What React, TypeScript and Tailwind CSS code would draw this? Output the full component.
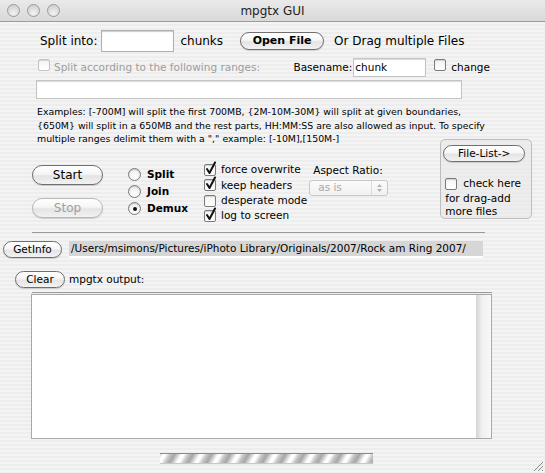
import React from "react";

const font = "font-['DejaVu_Sans',sans-serif]";

function Check({ checked = false, disabled = false }: { checked?: boolean; disabled?: boolean }) {
  return (
    <span className="relative inline-block w-[12px] h-[12px] shrink-0">
      <span
        className={
          "absolute inset-0 rounded-[2px] border bg-[linear-gradient(#f4f4f4,#ffffff)] shadow-[inset_0_1px_1px_rgba(0,0,0,0.15)] " +
          (disabled ? "border-[#c4c4c4]" : "border-[#7a7a7a]")
        }
      />
      {checked && (
        <svg className="absolute left-[1px] top-[-3px]" width="12" height="14" viewBox="0 0 12 14">
          <path d="M2 8 L4.5 12 L10 1.5" fill="none" stroke="#111" strokeWidth="2" strokeLinecap="round" strokeLinejoin="round" />
        </svg>
      )}
    </span>
  );
}

function Radio({ selected = false }: { selected?: boolean }) {
  return (
    <span className="relative inline-flex items-center justify-center w-[13px] h-[13px] rounded-full border border-[#7a7a7a] bg-[radial-gradient(circle_at_50%_70%,#ffffff,#e6e6e6)] shadow-[inset_0_1px_1px_rgba(0,0,0,0.15)] shrink-0">
      {selected && <span className="w-[4px] h-[4px] rounded-full bg-[#111]" />}
    </span>
  );
}

function AquaButton({
  children,
  className = "",
  disabled = false,
}: {
  children: React.ReactNode;
  className?: string;
  disabled?: boolean;
}) {
  return (
    <div
      className={
        "flex items-center justify-center rounded-full border bg-[linear-gradient(#ffffff_0%,#f6f6f6_45%,#e4e4e4_55%,#f2f2f2_100%)] shadow-[0_1px_1px_rgba(0,0,0,0.15)] " +
        (disabled ? "border-[#b8b8b8] text-[#a0a0a0]" : "border-[#6f6f6f] text-black") +
        " " +
        className
      }
    >
      {children}
    </div>
  );
}

export default function App() {
  return (
    <div
      className={
        "relative w-[545px] h-[473px] overflow-hidden text-black bg-[repeating-linear-gradient(180deg,#ededed_0px,#ededed_2px,#f4f4f4_2px,#f4f4f4_4px)] " +
        font
      }
    >
      {/* title bar */}
      <div className="relative flex items-center h-[22px] border-b border-[#9c9c9c] bg-[linear-gradient(#eaeaea,#d9d9d9)]">
        <div className="flex items-center gap-[7px] pl-[7px]">
          {[0, 1, 2].map((i) => (
            <span
              key={i}
              className="w-[13px] h-[13px] rounded-full border border-[#9a9a9a] bg-[radial-gradient(circle_at_50%_75%,#f2f2f2,#c9c9c9)]"
            />
          ))}
        </div>
        <div className="absolute inset-x-0 top-0 h-[22px] flex items-center justify-center text-[12px] text-[#222]">
          mpgtx GUI
        </div>
      </div>

      {/* row 1 */}
      <div className="flex items-center mt-[8px] h-[22px] text-[12px]">
        <span className="ml-[40px]">Split into:</span>
        <div className="ml-[4px] w-[73px] h-[22px] bg-white border border-[#b0b0b0] shadow-[inset_0_1px_1px_rgba(0,0,0,0.2)]" />
        <span className="ml-[6px]">chunks</span>
        <AquaButton className="ml-[17px] w-[84px] h-[18px] text-[11px] font-bold">Open File</AquaButton>
        <span className="ml-[10px]">Or Drag multiple Files</span>
      </div>

      {/* row 2 */}
      <div className="flex items-center mt-[6px] h-[19px] text-[10.5px]">
        <span className="ml-[38px]">
          <Check disabled />
        </span>
        <span className="ml-[4px] text-[#9d9d9d]">Split according to the following ranges:</span>
        <span className="ml-auto">Basename:</span>
        <div className="ml-[1px] w-[73px] h-[19px] bg-white border border-[#c4c4c4] shadow-[inset_0_1px_1px_rgba(0,0,0,0.15)] flex items-center pl-[1px]">
          chunk
        </div>
        <span className="ml-[8px]">
          <Check />
        </span>
        <span className="ml-[5px] mr-[55px]">change</span>
      </div>

      {/* row 3 */}
      <div className="mt-[3px] ml-[36px] w-[426px] h-[19px] bg-white border border-[#c4c4c4] shadow-[inset_0_1px_1px_rgba(0,0,0,0.15)]" />

      {/* examples */}
      <div className="mt-[6px] ml-[37px] h-[34px] text-[9.4px] leading-[13.5px]">
        Examples: [-700M] will split the first 700MB, {"{2M-10M-30M}"} will split at given boundaries,
        <br />
        {"{650M}"} will split in a 650MB and the rest parts, HH:MM:SS are also allowed as input. To specify
        <br />
        multiple ranges delimit them with a "," example: [-10M],[150M-]
      </div>

      {/* middle section */}
      <div className="flex items-start h-[80px]">
        <div className="ml-[32px] pt-[26px] flex flex-col gap-[13px]">
          <AquaButton className="w-[71px] h-[20px] text-[12px]">Start</AquaButton>
          <AquaButton disabled className="w-[71px] h-[20px] text-[12px]">
            Stop
          </AquaButton>
        </div>

        <div className="ml-[25px] pt-[29px] flex flex-col gap-[4px] text-[10.5px] font-bold">
          <div className="flex items-center gap-[6px] h-[13px]">
            <Radio />
            Split
          </div>
          <div className="flex items-center gap-[6px] h-[13px]">
            <Radio />
            Join
          </div>
          <div className="flex items-center gap-[6px] h-[13px]">
            <Radio selected />
            Demux
          </div>
        </div>

        <div className="ml-[16px] pt-[25px] flex flex-col gap-[3.4px] text-[10.5px]">
          {[
            ["force overwrite", true],
            ["keep headers", true],
            ["desperate mode", false],
            ["log to screen", true],
          ].map(([label, on]) => (
            <div key={label as string} className="flex items-center gap-[5px] h-[12px]">
              <Check checked={on as boolean} />
              {label}
            </div>
          ))}
        </div>

        <div className="ml-[2px] pt-[25px] flex flex-col text-[10.5px]">
          <span className="ml-[4px] h-[13px] leading-[13px]">Aspect Ratio:</span>
          <div className="mt-[3px] w-[79px] h-[16px] flex items-center rounded-[3px] border border-[#c8c8c8] bg-[linear-gradient(#fbfbfb,#f1f1f1)] text-[#a8a8a8]">
            <span className="ml-[8px] flex-1">as is</span>
            <span className="w-[16px] h-full flex items-center justify-center border-l border-[#dadada]">
              <svg width="7" height="10" viewBox="0 0 7 10">
                <path d="M1 4 L3.5 1 L6 4 Z M1 6 L3.5 9 L6 6 Z" fill="#b4b4b4" />
              </svg>
            </span>
          </div>
        </div>

        <div className="ml-[52px] w-[92px] h-[80px] rounded-[5px] border border-[#bdbdbd] bg-[#e8e8e8]/60 flex flex-col text-[10.5px]">
          <AquaButton className="mt-[5px] ml-[2px] w-[82px] h-[17px] text-[10.5px]">File-List-&gt;</AquaButton>
          <div className="mt-[16px] ml-[4px] flex items-center gap-[6px] h-[12px]">
            <Check />
            check here
          </div>
          <div className="ml-[4px] mt-[2px] leading-[13px]">
            for drag-add
            <br />
            more files
          </div>
        </div>
      </div>

      {/* separator */}
      <div className="mt-[13px] ml-[32px] w-[453px] h-[1px] bg-[#9a9a9a]" />

      {/* getinfo row */}
      <div className="flex items-center mt-[8px] h-[17px] text-[10.5px]">
        <AquaButton className="ml-[3px] w-[59px] h-[17px] text-[10.5px]">GetInfo</AquaButton>
        <div className="ml-[7px] w-[414px] h-[17px] flex items-center pl-[2px] bg-[#d6d6d6] border-b-[2px] border-white">
          /Users/msimons/Pictures/iPhoto Library/Originals/2007/Rock am Ring 2007/
        </div>
      </div>

      {/* clear row */}
      <div className="flex items-center mt-[13px] h-[17px] text-[10.5px]">
        <AquaButton className="ml-[15px] w-[50px] h-[17px] text-[10.5px]">Clear</AquaButton>
        <span className="ml-[4px]">mpgtx output:</span>
      </div>

      {/* separator */}
      <div className="mt-[4px] ml-[32px] w-[460px] h-[1px] bg-[#9a9a9a]" />

      {/* output */}
      <div className="mt-[1px] ml-[31px] w-[461px] h-[145px] flex bg-white border border-[#a8a8a8]">
        <div className="flex-1" />
        <div className="w-[15px] bg-[linear-gradient(90deg,#d4d4d4,#f0f0f0_40%,#f8f8f8)]" />
      </div>

      {/* progress */}
      <div className="mt-[14px] ml-[160px] w-[213px] h-[11px] border-t border-[#8a8a8a] border-b border-b-[#c8c8c8] bg-[repeating-linear-gradient(-60deg,#a6a6a6_0px,#c4c4c4_4px,#ffffff_8px,#ffffff_10px,#a6a6a6_16px)]" />

      {/* resize grip */}
      <svg className="absolute right-[1px] bottom-[1px]" width="11" height="11" viewBox="0 0 11 11">
        <path d="M10 1 L1 10 M10 5 L5 10 M10 9 L9 10" stroke="#8a8a8a" strokeWidth="1" />
      </svg>
    </div>
  );
}
